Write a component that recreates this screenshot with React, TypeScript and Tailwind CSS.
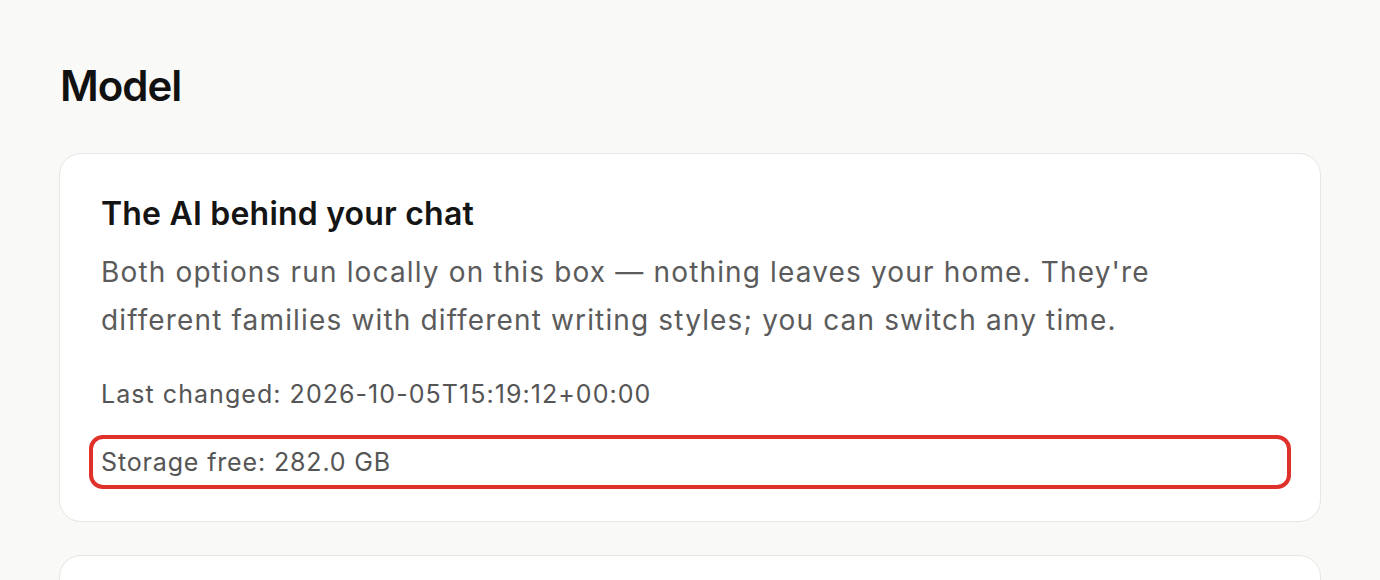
import React from "react";

const App: React.FC = () => {
  return (
    <div
      className="min-h-screen bg-[#f9f9f7] px-[59px] pt-[60px] pb-10"
      style={{ fontFamily: "Inter, 'Noto Sans', sans-serif" }}
    >
      {/* Section heading */}
      <h1 className="text-[42px] leading-[52px] font-semibold text-[#111111] tracking-[-1px] ml-px">
        Model
      </h1>

      <div className="mt-[41px] flex flex-col gap-[33px]">
        {/* Model card */}
        <div className="bg-white border border-[#e6e6e3] rounded-[22px] px-[41px] pt-[41px] pb-[32px]">
          <h2 className="text-[32px] leading-[38px] font-semibold text-[#141414] tracking-[0.2px]">
            The AI behind your chat
          </h2>
          <p className="mt-[15px] text-[28px] leading-[48px] text-[#5b5b5b] tracking-[1.15px] max-w-[1100px]">
            Both options run locally on this box — nothing leaves your home. They're
            different families with different writing styles; you can switch any time.
          </p>
          <p className="mt-[34px] text-[25px] leading-[32px] text-[#555555] tracking-[1.05px]">
            Last changed: 2026-10-05T15:19:12+00:00
          </p>
          <div className="mt-[25px] -mx-[12px] border-4 border-[#e0302a] rounded-[14px] px-[8px]">
            <p className="text-[25px] leading-[46px] text-[#555555] tracking-[0.85px]">
              Storage free: 282.0 GB
            </p>
          </div>
        </div>

        {/* Next card (cut off) */}
        <div className="bg-white border border-[#e6e6e3] rounded-[22px] h-[200px]" />
      </div>
    </div>
  );
};

export default App;
